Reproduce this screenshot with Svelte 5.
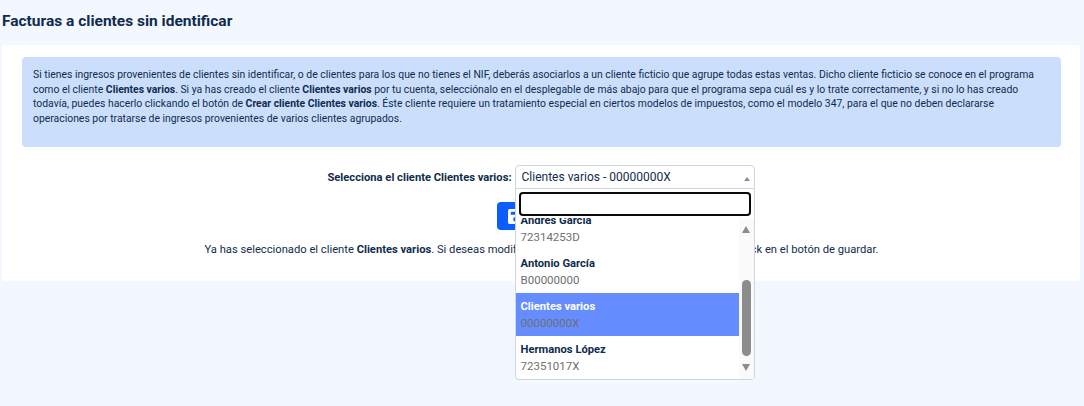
<script>
  let options = [
    { name: 'Andrés García', nif: '72314253D' },
    { name: 'Antonio García', nif: 'B00000000' },
    { name: 'Clientes varios', nif: '00000000X', selected: true },
    { name: 'Hermanos López', nif: '72351017X' }
  ];
</script>

<main>
  <h1>Facturas a clientes sin identificar</h1>

  <section class="card">
    <div class="alert">
      Si tienes ingresos provenientes de clientes sin identificar, o de clientes para los que no tienes el NIF, deberás asociarlos a un cliente ficticio que agrupe todas estas ventas. Dicho cliente ficticio se conoce en el programa como el cliente <b>Clientes varios</b>. Si ya has creado el cliente <b>Clientes varios</b> por tu cuenta, selecciónalo en el desplegable de más abajo para que el programa sepa cuál es y lo trate correctamente, y si no lo has creado todavía, puedes hacerlo clickando el botón de <b>Crear cliente Clientes varios</b>. Éste cliente requiere un tratamiento especial en ciertos modelos de impuestos, como el modelo 347, para el que no deben declararse operaciones por tratarse de ingresos provenientes de varios clientes agrupados.
    </div>

    <div class="select-row">
      <span class="label">Selecciona el cliente Clientes varios:</span>
      <div class="select">
        <div class="select-value">
          <span>Clientes varios - 00000000X</span>
          <i class="caret"></i>
        </div>

        <!-- open dropdown, sits over the button and the text below -->
        <div class="dropdown">
          <div class="search"><input type="text" aria-label="Buscar" /></div>
          <div class="results">
            <ul>
              {#each options as o}
                <li class:selected={o.selected}>
                  <strong>{o.name}</strong>
                  <span>{o.nif}</span>
                </li>
              {/each}
            </ul>
            <div class="scrollbar">
              <i class="arrow up"></i>
              <div class="track"><div class="thumb"></div></div>
              <i class="arrow down"></i>
            </div>
          </div>
        </div>
      </div>
    </div>

    <button type="button">
      <svg width="15" height="15" viewBox="0 0 16 16" aria-hidden="true">
        <path fill="#fff" d="M2 0h10l4 4v10a2 2 0 0 1-2 2H2a2 2 0 0 1-2-2V2a2 2 0 0 1 2-2zm1 3v3h8V3H3zm5 5.5a2.5 2.5 0 1 0 0 5 2.5 2.5 0 0 0 0-5z"/>
      </svg>
      Guardar
    </button>

    <p class="note">Ya has seleccionado el cliente <b>Clientes varios</b>. Si deseas modificarlo, selecciona otro cliente diferente y haz click en el botón de guardar.</p>
  </section>
</main>

<style>
  :global(body) { background: #f3f7ff; }
  main { height: 406px; box-sizing: border-box; padding: 0 4px 0 2px; font-family: Roboto, "Liberation Sans", sans-serif; color: #0f2c4d; overflow: hidden; }
  h1 { margin: 0; height: 45px; box-sizing: border-box; padding-top: 12px; font-size: 15.5px; line-height: 19px; font-weight: 700; }
  .card { height: 236px; box-sizing: border-box; padding: 12px 19px 0 20px; background: #fff; border-radius: 3px; text-align: center; }
  .alert { height: 90px; box-sizing: border-box; padding: 11px 11px; background: #cbdffd; border-radius: 4px; text-align: left; font-size: 10.4px; line-height: 14.5px; }
  b { font-weight: 700; }
  .select-row { display: flex; justify-content: center; align-items: center; gap: 3px; margin-top: 18px; height: 24px; padding-right: 1px; }
  .label { font-size: 11.2px; font-weight: 700; }
  .select { position: relative; width: 240px; height: 24px; }
  .select-value { display: flex; align-items: center; height: 100%; box-sizing: border-box; padding: 0 6px; border: 1px solid #cdd7e3; border-radius: 4px 4px 0 0; background: #fff; font-size: 12px; text-align: left; }
  .caret { position: absolute; right: 5px; top: 12px; border: 3.5px solid transparent; border-top: 0; border-bottom: 4px solid #8a8f96; }
  .dropdown { position: absolute; left: 0; top: 24px; width: 240px; height: 191px; box-sizing: border-box; border: 1px solid #cdd7e3; border-top: 0; border-radius: 0 0 4px 4px; background: #fff; text-align: left; z-index: 2; }
  .search { height: 29px; box-sizing: border-box; padding: 3px 3px 0; }
  input { display: block; width: 100%; height: 24px; box-sizing: border-box; border: 2px solid #0a0a0a; border-radius: 4px; outline: 0; background: #fff; }
  .results { position: relative; height: 161px; overflow: hidden; }
  ul { list-style: none; margin: -11px 15px 0 0; padding: 0; }
  li { height: 43px; box-sizing: border-box; padding: 7px 5px 0; display: flex; flex-direction: column; gap: 2px; }
  li strong { font-size: 11.2px; line-height: 14px; font-weight: 700; }
  li span { font-size: 11.5px; line-height: 14px; color: #6f6f6f; }
  .selected { background: #668dff; }
  .selected strong { color: #fff; }
  .scrollbar { position: absolute; right: 0; top: 1px; bottom: 0; width: 15px; background: #fafafa; display: flex; flex-direction: column; align-items: center; }
  .arrow { display: block; flex: none; border: 4.5px solid transparent; }
  .arrow.up { margin-top: 7px; border-top: 0; border-bottom: 7px solid #8c8c8c; }
  .arrow.down { margin-bottom: 8px; border-bottom: 0; border-top: 7px solid #8c8c8c; }
  .track { flex: 1; width: 100%; position: relative; }
  .thumb { position: absolute; left: 3px; right: 3px; top: 47px; bottom: 8px; border-radius: 5px; background: #8c8c8c; }
  button { display: flex; align-items: center; gap: 6px; margin: 13px auto 0; height: 28px; padding: 0 15px 0 11px; border: 0; border-radius: 4px; background: #0d5cff; color: #fff; font: 500 12px Roboto, sans-serif; }
  .note { margin: 13px 0 0; font-size: 11.2px; line-height: 13px; }
</style>
